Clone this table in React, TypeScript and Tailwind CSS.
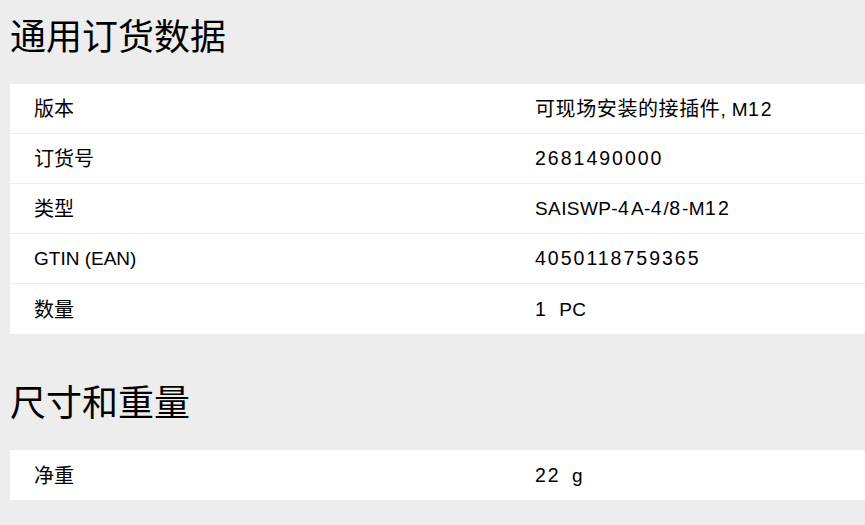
import React from "react";

interface Spec {
  label: string;
  value: string;
}

const orderData: Spec[] = [
  { label: "版本", value: "可现场安装的接插件, M12" },
  { label: "订货号", value: "2681490000" },
  { label: "类型", value: "SAISWP-4A-4/8-M12" },
  { label: "GTIN (EAN)", value: "4050118759365" },
  { label: "数量", value: "1  PC" },
];

const dimensions: Spec[] = [{ label: "净重", value: "22  g" }];

const hasCJK = (s: string) => /[^\x00-\x7f]/.test(s);

// digits in the source font are wider than Arial's, so runs of them get extra spacing
function Value({ text }: { text: string }) {
  const parts = text.split(/(\d+|[^\x00-\x7f]+)/).filter(Boolean);
  return (
    <span className="whitespace-pre">
      {parts.map((p, i) =>
        /^\d+$/.test(p) ? (
          <span key={i} className="text-[19.5px] tracking-[2px]">
            {p}
          </span>
        ) : hasCJK(p) ? (
          <span key={i} className="text-[20px] tracking-[0.6px]">
            {p}
          </span>
        ) : (
          <span key={i} className="text-[19px] tracking-[0.4px]">
            {p}
          </span>
        )
      )}
    </span>
  );
}

function SpecTable({ rows }: { rows: Spec[] }) {
  return (
    <div className="bg-white">
      {rows.map((row) => (
        <div
          key={row.label}
          className="grid grid-cols-[501px_1fr] h-[50px] items-center pl-6 pt-px border-b border-[#ececec] last:border-b-0"
        >
          <span className={hasCJK(row.label) ? "text-[20px]" : "text-[19px]"}>
            {row.label}
          </span>
          <Value text={row.value} />
        </div>
      ))}
    </div>
  );
}

export default function App() {
  return (
    <div
      className="min-h-screen bg-[#ededed] pl-[10px] pt-4 text-black"
      style={{ fontFamily: '"Liberation Sans", "Noto Sans CJK SC", sans-serif' }}
    >
      <h2 className="text-[36px] leading-[44px] font-normal mb-6">通用订货数据</h2>
      <SpecTable rows={orderData} />

      <h2 className="text-[36px] leading-[44px] font-normal mt-12 mb-6">尺寸和重量</h2>
      <SpecTable rows={dimensions} />
    </div>
  );
}
